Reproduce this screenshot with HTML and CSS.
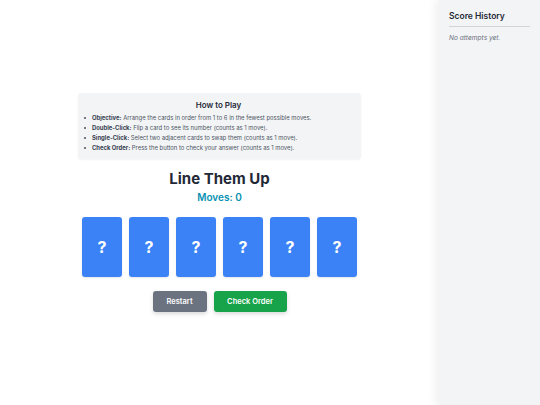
FILE: index.html
```html
<!DOCTYPE html>
<html>
<head>
<meta charset="utf-8">
<link rel="stylesheet" href="styles.css">
</head>
<body>
<div class="layout">
  <main class="main">
    <div class="game">
      <section class="rules">
        <h2 class="rules-title">How to Play</h2>
        <ul class="rules-list">
          <li><b>Objective:</b> Arrange the cards in order from 1 to 6 in the fewest possible moves.</li>
          <li><b>Double-Click:</b> Flip a card to see its number (counts as 1 move).</li>
          <li><b>Single-Click:</b> Select two adjacent cards to swap them (counts as 1 move).</li>
          <li><b>Check Order:</b> Press the button to check your answer (counts as 1 move).</li>
        </ul>
      </section>
      <h1 class="title">Line Them Up</h1>
      <div class="moves">Moves: 0</div>
      <div class="cards">
        <div class="card">?</div>
        <div class="card">?</div>
        <div class="card">?</div>
        <div class="card">?</div>
        <div class="card">?</div>
        <div class="card">?</div>
      </div>
      <div class="buttons">
        <button class="btn btn-restart">Restart</button>
        <button class="btn btn-check">Check Order</button>
      </div>
    </div>
  </main>
  <aside class="sidebar">
    <h3 class="side-title">Score History</h3>
    <p class="empty">No attempts yet.</p>
  </aside>
</div>
</body>
</html>
```
FILE: styles.css
```css
* { box-sizing: border-box; }
html, body { margin: 0; padding: 0; height: 100%; }
body {
  font-family: Inter, "Noto Sans", "Liberation Sans", sans-serif;
  background: #ffffff;
  color: #1f2937;
}
.layout { display: flex; height: 405px; }
.main {
  flex: 1;
  display: flex;
  align-items: center;
  justify-content: center;
}
.game {
  display: flex;
  flex-direction: column;
  align-items: center;
}
.rules {
  width: 283px;
  background: #f3f4f6;
  border-radius: 4px;
  padding: 6px 8px 6px 6px;
  box-shadow: 0 1px 2px rgba(0,0,0,0.05);
}
.rules-title {
  margin: 0 0 2px 0;
  text-align: center;
  font-size: 8px;
  font-weight: 600;
  color: #1f2937;
  line-height: 12px;
}
.rules-list {
  margin: 0;
  padding: 0;
  list-style: none;
  font-size: 5.9px;
  line-height: 10px;
  color: #4b5563;
}
.rules-list li {
  display: flex;
  align-items: baseline;
  gap: 0;
}
.rules-list li::before {
  content: "";
  flex: none;
  width: 2px;
  height: 2px;
  border-radius: 50%;
  background: #4b5563;
  margin: 0 6px 0 0;
  align-self: center;
}
.rules-list li { display: block; position: relative; padding-left: 8px; }
.rules-list li::before { position: absolute; left: 0; top: 4px; }
.rules-list b { color: #374151; font-weight: 700; }
.title {
  margin: 10px 0 0 0;
  font-size: 15px;
  font-weight: 700;
  line-height: 20px;
  color: #1f2937;
}
.moves {
  margin-top: 1px;
  font-size: 10px;
  font-weight: 600;
  color: #0891b2;
  line-height: 14px;
}
.cards {
  display: flex;
  gap: 7px;
  margin-top: 13px;
}
.card {
  width: 40px;
  height: 60px;
  background: #3b82f6;
  border-radius: 3px;
  color: #fff;
  font-weight: 700;
  font-size: 16px;
  display: flex;
  align-items: center;
  justify-content: center;
  box-shadow: 0 1px 2px rgba(0,0,0,0.1);
}
.buttons {
  display: flex;
  gap: 7px;
  margin-top: 14px;
}
.btn {
  border: none;
  border-radius: 3px;
  height: 21px;
  font-family: inherit;
  font-size: 7.5px;
  font-weight: 600;
  color: #fff;
  box-shadow: 0 2px 4px rgba(0,0,0,0.15);
}
.btn-restart { width: 54px; background: #6b7280; }
.btn-check { width: 73px; background: #16a34a; }
.sidebar {
  width: 101px;
  background: #f3f4f6;
  box-shadow: -4px 0 8px rgba(0,0,0,0.06);
  padding: 10px 10px;
}
.side-title {
  margin: 0;
  font-size: 8.5px;
  font-weight: 600;
  color: #1f2937;
  padding-bottom: 4px;
  border-bottom: 1px solid #d1d5db;
  line-height: 12px;
}
.empty {
  margin: 6px 0 0 0;
  font-size: 6.6px;
  font-style: italic;
  color: #6b7280;
  line-height: 10px;
}
```
